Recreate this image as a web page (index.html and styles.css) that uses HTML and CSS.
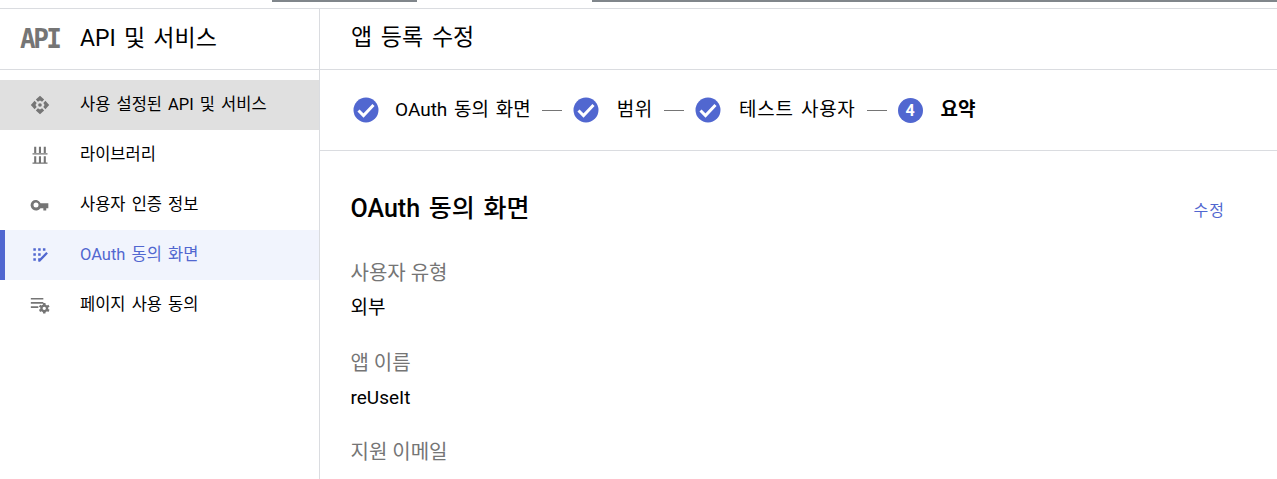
FILE: index.html
```html
<!DOCTYPE html>
<html lang="ko">
<head>
    <meta charset="UTF-8">
    <meta name="viewport" content="width=device-width, initial-scale=1.0">
    <title>앱 등록 수정</title>
    <link rel="stylesheet" href="styles.css">
</head>
<body>
    <div class="tabstrip">
        <span class="tab-line tab-line-a"></span>
        <span class="tab-line tab-line-b"></span>
    </div>
    <div class="layout">
        <aside class="sidebar">
            <div class="brand">
                <span class="api-logo">API</span>
                <span class="brand-title">API 및 서비스</span>
            </div>
            <nav class="nav">
                <a class="nav-item selected">
                    <svg class="nav-icon" viewBox="0 0 24 24"><path d="M12 1l5 4.500-2.500 2.500L12 6.500 9.500 8 7 5.500zM12 23l-5-4.500L9.500 16l2.500 1.500 2.500-1.500 2.500 2.500zM1 12l4.500-5L8 9.500 6.500 12 8 14.500 5.500 17zM23 12l-4.500 5-2.500-2.500 1.500-2.500L16 9.500 18.500 7z"/><circle cx="12" cy="12" r="2.200"/></svg>
                    <span>사용 설정된 API 및 서비스</span>
                </a>
                <a class="nav-item">
                    <svg class="nav-icon" viewBox="0 0 24 24"><path d="M5 2h2.500v7.500H5zM10.700 2h2.500v7.500h-2.500zM16.500 2H19v7.500h-2.500zM3 10h18v1.500H3zM5 13.500h2.500V21H5zM10.700 13.500h2.500V21h-2.500zM16.500 13.500H19V21h-2.500zM3 21h18v1.500H3z"/></svg>
                    <span>라이브러리</span>
                </a>
                <a class="nav-item">
                    <svg class="nav-icon" viewBox="0 0 24 24"><path d="M12.600 10A6.200 6.200 0 0 0 2 8.300a6.200 6.200 0 0 0 10.600 7.700H16v2.500h3.500V16H22v-6zM7.200 15a3 3 0 1 1 0-6 3 3 0 0 1 0 6z"/></svg>
                    <span>사용자 인증 정보</span>
                </a>
                <a class="nav-item active">
                    <svg class="nav-icon" viewBox="0 0 24 24"><path d="M4 4h3v3H4zM9.800 4h3v3h-3zM15.500 4h3v3h-3zM4 10h3v3H4zM9.800 10h3v3h-3zM4 16h3v3H4zM9.800 16h3v3h-3zM19.500 8.500l2 1.800-9.500 9.700H10v-2z"/></svg>
                    <span>OAuth 동의 화면</span>
                </a>
                <a class="nav-item">
                    <svg class="nav-icon" viewBox="0 0 24 24"><path d="M1 3.500h15v2H1zM1 8.500h15v2H1zM1 13.500h9v2H1z"/><path d="M23.500 17.800l-1.700-.9a4.500 4.500 0 0 0 0-1.800l1.700-.9-1.400-2.500-1.800.8a4.500 4.500 0 0 0-1.500-.9L18.500 9.700h-2.800l-.3 1.900a4.500 4.500 0 0 0-1.500.9l-1.800-.8-1.400 2.500 1.700.9a4.500 4.500 0 0 0 0 1.800l-1.700.9 1.400 2.500 1.800-.8a4.500 4.500 0 0 0 1.500.9l.3 1.900h2.800l.3-1.900a4.500 4.500 0 0 0 1.500-.9l1.800.8zM17.100 18a2 2 0 1 1 0-4 2 2 0 0 1 0 4z"/></svg>
                    <span>페이지 사용 동의</span>
                </a>
            </nav>
        </aside>
        <main class="content">
            <header class="page-header">
                <h1>앱 등록 수정</h1>
            </header>
            <div class="stepper">
                <svg class="step-check" viewBox="0 0 26 26"><circle cx="13" cy="13" r="12.500"/><path d="M5.500 13.500l5 5L20.500 8"/></svg>
                <span class="step-label">OAuth 동의 화면</span>
                <span class="step-dash"></span>
                <svg class="step-check" viewBox="0 0 26 26"><circle cx="13" cy="13" r="12.500"/><path d="M5.500 13.500l5 5L20.500 8"/></svg>
                <span class="step-label wide">범위</span>
                <span class="step-dash"></span>
                <svg class="step-check" viewBox="0 0 26 26"><circle cx="13" cy="13" r="12.500"/><path d="M5.500 13.500l5 5L20.500 8"/></svg>
                <span class="step-label wide">테스트 사용자</span>
                <span class="step-dash"></span>
                <span class="step-num">4</span>
                <span class="step-label current">요약</span>
            </div>
            <section class="summary">
                <div class="summary-head">
                    <h2>OAuth 동의 화면</h2>
                    <a class="edit-link">수정</a>
                </div>
                <div class="field">
                    <div class="field-label">사용자 유형</div>
                    <div class="field-value">외부</div>
                </div>
                <div class="field">
                    <div class="field-label">앱 이름</div>
                    <div class="field-value">reUseIt</div>
                </div>
                <div class="field">
                    <div class="field-label">지원 이메일</div>
                </div>
            </section>
        </main>
    </div>
</body>
</html>
```

FILE: styles.css
```css
* {
    box-sizing: border-box;
}
html, body {
    height: 100%;
}
body {
    margin: 0;
    overflow: hidden;
    background-color: white;
    color: #000;
    font-family: Roboto, "Noto Sans CJK KR", sans-serif;
    font-size: 16px;
}
.tabstrip {
    display: flex;
    height: 9px;
    border-bottom: 1px solid #dadce0;
}
.tab-line {
    height: 2px;
    background-color: #80868b;
}
.tab-line-a {
    width: 145px;
    margin-left: 272px;
}
.tab-line-b {
    flex: 1;
    margin-left: 175px;
}
.layout {
    display: flex;
    height: 470px;
}
.sidebar {
    width: 320px;
    flex-shrink: 0;
    border-right: 1px solid #dadce0;
}
.brand {
    display: flex;
    align-items: center;
    height: 61px;
    padding-left: 20px;
    border-bottom: 1px solid #dadce0;
}
.api-logo {
    width: 60px;
    color: #757575;
    font-family: "DejaVu Sans Mono", monospace;
    font-size: 26px;
    font-weight: 700;
    letter-spacing: -2.5px;
}
.brand-title {
    padding-bottom: 6px;
    font-size: 23px;
    word-spacing: 2.5px;
}
.nav {
    padding-top: 10px;
}
.nav-item {
    display: flex;
    align-items: center;
    height: 50px;
    padding-left: 30px;
}
.nav-item span {
    margin-left: 30px;
    padding-bottom: 4px;
    font-size: 16.5px;
    word-spacing: 2px;
}
.nav-icon {
    width: 20px;
    height: 20px;
    fill: #757575;
}
.nav-item.selected {
    background-color: #e0e0e0;
}
.nav-item.active {
    padding-left: 25px;
    border-left: 5px solid #5167d0;
    background-color: #f1f4fd;
    color: #5167d0;
}
.nav-item.active .nav-icon {
    fill: #5167d0;
}
.content {
    flex: 1;
    min-width: 0;
}
.page-header {
    display: flex;
    align-items: center;
    height: 61px;
    padding: 0 0 9px 31px;
    border-bottom: 1px solid #dadce0;
}
h1 {
    margin: 0;
    font-size: 23px;
    font-weight: 400;
    word-spacing: 3px;
}
.stepper {
    display: flex;
    align-items: center;
    height: 81px;
    padding-left: 33px;
    border-bottom: 1px solid #dadce0;
}
.step-check {
    width: 26px;
    height: 26px;
    flex-shrink: 0;
}
.step-check circle {
    fill: #5167d0;
}
.step-check path {
    fill: none;
    stroke: white;
    stroke-width: 3;
}
.step-label {
    margin-left: 18px;
    padding-bottom: 6px;
    font-size: 19px;
    word-spacing: 2px;
}
.step-check:first-child + .step-label {
    margin-left: 16px;
}
.step-label.wide {
    letter-spacing: 0.7px;
}
.step-label.current {
    font-weight: 700;
}
.step-dash {
    width: 20px;
    height: 1px;
    margin: 0 11px;
    background-color: #757575;
}
.step-num {
    display: flex;
    align-items: center;
    justify-content: center;
    width: 25px;
    height: 25px;
    border-radius: 50%;
    background-color: #5167d0;
    color: white;
    font-size: 16px;
    font-weight: 700;
}
.summary {
    padding: 37px 52px 0 30.5px;
}
.summary-head {
    display: flex;
    align-items: center;
    justify-content: space-between;
    margin-bottom: 35px;
}
h2 {
    margin: 0;
    font-size: 25px;
    font-weight: 500;
    word-spacing: 2.5px;
}
.edit-link {
    margin-top: 6px;
    color: #5167d0;
    letter-spacing: 1px;
}
.field {
    margin-bottom: 26.5px;
}
.field-label {
    color: #757575;
    font-size: 20px;
    line-height: 28px;
}
.field-value {
    margin-top: 7px;
    font-size: 19px;
    line-height: 28px;
}
```
